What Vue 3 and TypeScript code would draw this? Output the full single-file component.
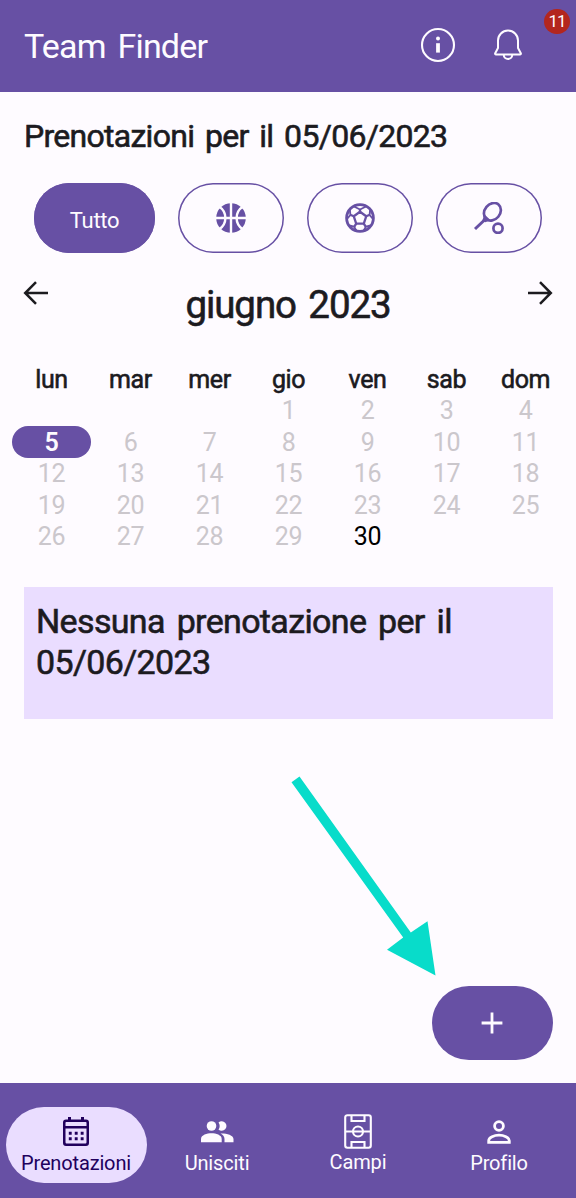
<script setup lang="ts">
interface Day {
  n: number
  state: 'off' | 'selected' | 'open'
}

const weekdays: string[] = ['lun', 'mar', 'mer', 'gio', 'ven', 'sab', 'dom']
const days: Day[] = Array.from({ length: 30 }, (_, i) => ({
  n: i + 1,
  state: i + 1 === 5 ? 'selected' : i + 1 === 30 ? 'open' : 'off',
}))
</script>

<template>
  <div class="app">
    <header class="bar">
      <h1 class="brand">Team Finder</h1>
      <svg class="info" viewBox="0 0 36 36">
        <circle cx="18" cy="18" r="16" fill="none" stroke="currentColor" stroke-width="2.1" />
        <circle cx="18" cy="11.6" r="2" fill="currentColor" />
        <path d="M16.1 16.2h3.8v9.4h-3.8z" fill="currentColor" />
      </svg>
      <svg class="bell" viewBox="0 0 30 34" fill="none" stroke="currentColor" stroke-width="2" stroke-linejoin="round" stroke-linecap="round">
        <path d="M5 12.5a10 10 0 0 1 20 0v7.5l2.8 5.2c.3.7 0 1.3-.8 1.3H3c-.8 0-1.100-.6-.8-1.300L5 20z" />
        <path d="M10.800 27a4.200 4 0 0 0 8.400 0" />
      </svg>
      <span class="badge">11</span>
    </header>

    <main class="content">
      <h2 class="heading">Prenotazioni per il 05/06/2023</h2>

      <div class="filters">
        <button class="chip chip-on">Tutto</button>
        <button class="chip">
          <svg class="sport" viewBox="0 0 32 32">
            <circle cx="16" cy="16" r="14.800" fill="currentColor" />
            <g fill="none" stroke="#fefbff" stroke-width="2.400">
              <path d="M16 0v32M0 16h32" />
              <path d="M4 4.500c8.500 5.500 8.500 17.500 0 23M28 4.500c-8.500 5.500-8.500 17.500 0 23" />
            </g>
          </svg>
        </button>
        <button class="chip">
          <svg class="sport" viewBox="0 0 32 32" fill="none" stroke="currentColor" stroke-width="2.300" stroke-linejoin="round">
            <circle cx="16" cy="16" r="13.400" stroke-width="2.800" />
            <path d="M16 9.800l6.200 4.500-2.400 7.300h-7.600l-2.400-7.300z" />
            <path d="M16 10V7M22 14.300l4-1.600M19.800 21.600l2.200 3.600M12.200 21.600L10 25.200M10 14.300l-4-1.600" />
            <path d="M10 4.500l6 3 6-3M26.200 7.500L25.600 13l3.400 4M26.500 23.500l-4.500 1.200-2.500 4M5.500 23.500l4.500 1.200 2.500 4M5.800 7.500L6.400 13 3 17" stroke-width="1.900" />
          </svg>
        </button>
        <button class="chip">
          <svg class="sport" viewBox="0 0 32 32" fill="none" stroke="currentColor" stroke-width="2.700">
            <ellipse cx="19.400" cy="9.800" rx="7.700" ry="9.500" transform="rotate(40 19.400 9.800)" />
            <path d="M2 27L11.500 18" stroke-width="3" />
            <path d="M9.200 18.700l2.300-6.200 6.200 5.800-5.400 1.900z" fill="currentColor" stroke="none" />
            <circle cx="25" cy="26.300" r="4.600" />
          </svg>
        </button>
      </div>

      <div class="month">
        <svg class="arrow" viewBox="0 0 26 26" fill="none" stroke="currentColor" stroke-width="2.500">
          <path d="M25 13H3M13 2.200L2.200 13 13 23.800" />
        </svg>
        <span class="month-name">giugno 2023</span>
        <svg class="arrow" viewBox="0 0 26 26" fill="none" stroke="currentColor" stroke-width="2.500">
          <path d="M1 13h22M13 2.200L23.800 13 13 23.800" />
        </svg>
      </div>

      <div class="calendar">
        <span v-for="w in weekdays" :key="w" class="weekday">{{ w }}</span>
        <span v-for="d in days" :key="d.n" class="day" :class="[d.state, { first: d.n === 1 }]">{{ d.n }}</span>
      </div>

      <section class="card">
        <p class="message">Nessuna prenotazione per il 05/06/2023</p>
      </section>

      <svg class="pointer" viewBox="0 0 160 210" fill="#08dcca">
        <path d="M11.500 22.200L19.500 16.500 130.800 172.600 147.500 161.300 155.500 215.500 107 189.800 123.200 177.500z" transform="translate(0 -10)" />
      </svg>

      <button class="fab">
        <svg class="plus" viewBox="0 0 22 22" stroke="currentColor" stroke-width="2.800"><path d="M11 .6v20.800M.6 11h20.800" /></svg>
      </button>
    </main>

    <nav class="tabs">
      <a class="tab active">
        <svg class="tab-icon" viewBox="0 0 36 36">
          <path d="M8 5.500h20a3 3 0 0 1 3 3V29a3 3 0 0 1-3 3H8a3 3 0 0 1-3-3V8.500a3 3 0 0 1 3-3zM7.500 14.500V28c0 1 .5 1.500 1.500 1.500h18c1 0 1.500-.5 1.500-1.500V14.500zM7.500 8.700V12h21V8.700c0-.5-.3-.7-.7-.7H8.200c-.5 0-.7.2-.7.700z" fill="currentColor" fill-rule="evenodd" />
          <path d="M11.500 3v4M24.500 3v4" stroke="currentColor" stroke-width="3" />
          <path d="M10.800 19.200h14.800M10.800 24.800h14.800" stroke="currentColor" stroke-width="3" stroke-dasharray="2.900 3.050" />
        </svg>
        <span class="label">Prenotazioni</span>
      </a>
      <a class="tab">
        <svg class="tab-icon" viewBox="0 0 36 36" fill="currentColor">
          <circle cx="12.500" cy="12" r="4.800" />
          <path d="M2 28.300v-3.300c0-4 6-5.700 10.500-5.700S22.700 21 22.700 25v3.300z" />
          <path d="M19.500 8.400a4.800 4.800 0 1 1 0 7.200c1.600-2 1.600-5.200 0-7.200zM21.500 19.500c5.500-.3 13 1.500 13 5.500v3.300h-9V25c0-2.500-1.600-4.300-4-5.500z" />
        </svg>
        <span class="label">Unisciti</span>
      </a>
      <a class="tab">
        <svg class="tab-icon pitch" viewBox="0 0 36 36" fill="none" stroke="currentColor" stroke-width="2.100">
          <rect x="5.200" y="1.200" width="25.600" height="32.600" rx="2.200" />
          <path d="M5 17.500h26M11.500 1v6h13V1M11.500 34v-6h13v6" />
          <circle cx="18" cy="17.500" r="5" />
        </svg>
        <span class="label">Campi</span>
      </a>
      <a class="tab">
        <svg class="tab-icon" viewBox="0 0 36 36" fill="none" stroke="currentColor" stroke-width="2.800">
          <circle cx="18" cy="12" r="4.400" />
          <path d="M7.700 28.300v-1.500c0-3.300 5.500-5.600 10.300-5.600s10.300 2.300 10.300 5.600v1.500z" />
        </svg>
        <span class="label">Profilo</span>
      </a>
    </nav>
  </div>
</template>

<style>
body {
  margin: 0;
}
</style>

<style scoped>
.app {
  display: flex;
  flex-direction: column;
  width: 576px;
  height: 1198px;
  overflow: hidden;
  background: #fefbff;
  color: #1c1b1f;
  font-family: Roboto, "Liberation Sans", sans-serif;
}
h1, h2, p {
  margin: 0;
  font-weight: 400;
}
button {
  font: inherit;
  border: 0;
  padding: 0;
}
svg {
  display: block;
  flex: none;
}
.bar {
  position: relative;
  box-sizing: border-box;
  display: flex;
  align-items: center;
  height: 92px;
  padding: 0 53px 2px 24px;
  background: #6750a4;
  color: #fefbff;
}
.brand {
  flex: 1;
  padding-top: 2px;
  font-size: 34px;
  line-height: 90px;
  letter-spacing: -0.8px;
  word-spacing: 4px;
}
.info {
  width: 36px;
  height: 36px;
  margin-right: 37px;
}
.bell {
  width: 30px;
  height: 34px;
}
.badge {
  position: absolute;
  top: 9px;
  right: 6px;
  width: 26px;
  height: 25px;
  border-radius: 13px;
  background: #b3261e;
  font-size: 17px;
  line-height: 25px;
  letter-spacing: -1px;
  text-align: center;
}
.content {
  display: flex;
  flex-direction: column;
  height: 991px;
}
.heading,
.month-name,
.weekday,
.message {
  -webkit-text-stroke: 0.6px currentColor;
}
.heading {
  margin: 24px 24px 0;
  font-size: 32px;
  line-height: 40px;
  letter-spacing: -0.72px;
  word-spacing: 3.500px;
  white-space: nowrap;
}
.filters {
  display: flex;
  gap: 23px;
  margin: 27px 34px 0;
}
.chip {
  box-sizing: border-box;
  display: flex;
  align-items: center;
  justify-content: center;
  width: 106px;
  height: 70px;
  border-radius: 35px;
  box-shadow: inset 0 0 0 1.500px #6750a4;
  background: transparent;
  color: #6750a4;
}
.chip-on {
  width: 121px;
  padding-top: 4px;
  background: #6750a4;
  color: #fefbff;
  font-size: 22px;
  letter-spacing: -0.3px;
}
.sport {
  width: 32px;
  height: 32px;
}
.month {
  display: flex;
  justify-content: space-between;
  margin: 27px 23px 0;
  height: 50px;
}
.arrow {
  width: 26px;
  height: 26px;
}
.month-name {
  font-size: 38.500px;
  line-height: 50px;
  letter-spacing: -1.1px;
  word-spacing: 4px;
}
.calendar {
  display: grid;
  grid-template-columns: repeat(7, 79px);
  grid-template-rows: 32px repeat(5, 31.500px);
  margin: 32px 0 0 12px;
  font-size: 25px;
  line-height: 34px;
  letter-spacing: -0.4px;
  text-align: center;
}
.weekday {
  line-height: 36px;
}
.day {
  height: 32px;
}
.first {
  grid-column: 4;
}
.off {
  color: #cbc7cc;
}
.selected {
  border-radius: 16px;
  background: #6750a4;
  color: #fefbff;
  font-weight: 600;
}
.open {
  color: #000;
}
.card {
  box-sizing: border-box;
  height: 132px;
  margin: 35px 23px 0 24px;
  padding: 14px 12px;
  background: #eaddff;
}
.message {
  font-size: 34px;
  line-height: 41px;
  letter-spacing: -0.65px;
  word-spacing: 4px;
}
.pointer {
  width: 160px;
  height: 210px;
  margin: 51px 0 0 280px;
}
.fab {
  box-sizing: border-box;
  display: flex;
  align-items: center;
  justify-content: center;
  width: 121px;
  height: 74px;
  margin: 6px 23px 0 auto;
  padding-right: 1px;
  border-radius: 37px;
  background: #6750a4;
  color: #fefbff;
}
.plus {
  width: 22px;
  height: 22px;
}
.tabs {
  display: grid;
  grid-template-columns: repeat(4, 141px);
  box-sizing: border-box;
  height: 115px;
  padding: 24px 6px 0;
  background: #6750a4;
}
.tab {
  display: flex;
  flex-direction: column;
  align-items: center;
  box-sizing: border-box;
  height: 76px;
  padding: 7px 1px 0 0;
  border-radius: 38px;
  color: #fefbff;
}
.active {
  background: #eaddff;
  color: #21005d;
}
.tab-icon {
  width: 36px;
  height: 36px;
}
.pitch {
  margin-bottom: -1px;
}
.label {
  font-size: 20px;
  line-height: 26px;
  letter-spacing: -0.15px;
  white-space: nowrap;
}
</style>
